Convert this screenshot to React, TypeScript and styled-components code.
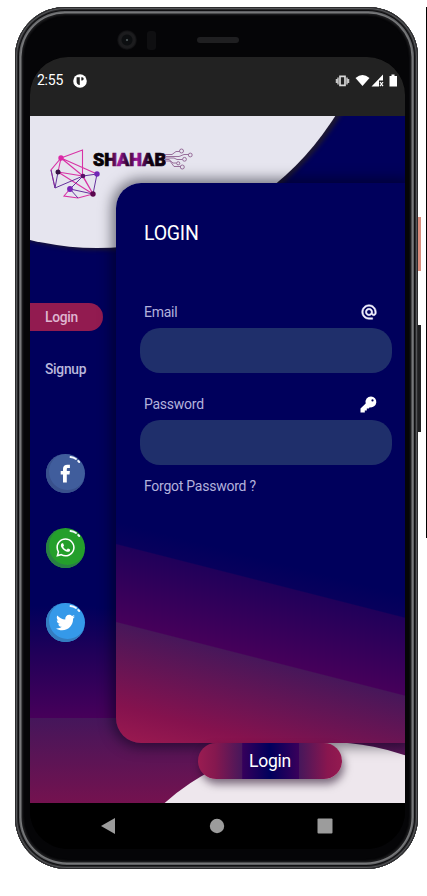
import React from 'react';
import styled, { createGlobalStyle } from 'styled-components';
import { FaWhatsapp, FaTwitter } from 'react-icons/fa';

const GlobalStyle = createGlobalStyle`
  * { box-sizing: border-box; }
  body { margin: 0; background: #fff; font-family: Roboto, sans-serif; }
  button, input { font: inherit; border: 0; }
`;

const Stage = styled.div`
  position: relative;
  width: 427px;
  height: 896px;
  padding: 7px 0 0 15px;
  overflow: hidden;
  background: #fff;
`;

const Phone = styled.div`
  position: relative;
  width: 403px;
  height: 862px;
  padding: 50px 13px 20px 15px;
  border-radius: 50px 50px 52px 52px;
  background: #050507;
  box-shadow: inset 0 0 0 1px #2c2c2e, inset 0 0 0 2px #555659, inset 0 0 0 3px #29292b,
    inset 0 0 0 4px #101012, inset 0 0 0 5px #5f6063, inset 0 0 0 6.5px #77787a,
    inset 0 0 2px 8px #202022;
`;

const SideKey = styled.div<{ $top: number; $height: number; $color: string }>`
  position: absolute;
  left: 418px;
  top: ${p => p.$top}px;
  width: 3px;
  height: ${p => p.$height}px;
  background: ${p => p.$color};
`;

const EdgeRule = styled.div`
  position: absolute;
  right: 0;
  top: 7px;
  width: 1px;
  height: 531px;
  background: #000;
`;

const Sensors = styled.div`
  position: absolute;
  left: 102px;
  top: 23px;
  display: flex;
  align-items: center;
`;

const Lens = styled.div`
  width: 20px;
  height: 20px;
  border-radius: 50%;
  background: radial-gradient(circle, #4c5557 0 .6px, #0c0e10 1.6px 5px, #1c1c1e 6px 8px, #09090b 10px);
`;

const Proximity = styled.div`
  width: 9px;
  height: 19px;
  margin-left: 10px;
  border-radius: 3px;
  background: #0f0f11;
`;

const Speaker = styled.div`
  width: 42px;
  height: 6px;
  margin-left: 41px;
  border-radius: 3px;
  background: #1f1f21;
`;

const Screen = styled.div`
  display: flex;
  flex-direction: column;
  width: 375px;
  height: 792px;
  border-radius: 38px;
  overflow: hidden;
  background: #000;
`;

const StatusBar = styled.div`
  display: flex;
  align-items: flex-start;
  justify-content: space-between;
  height: 59px;
  padding: 15px 6px 0 7px;
  background: #222;
  color: #fff;
`;

const StatusGroup = styled.div`
  display: flex;
  align-items: center;
  height: 17px;
`;

const Clock = styled.span`
  width: 36px;
  font-size: 14px;
  letter-spacing: -0.25px;
  line-height: 19px;
`;

const AppView = styled.main`
  position: relative;
  display: flex;
  height: 687px;
  flex: none;
  overflow: hidden;
  background:
    linear-gradient(180deg, #45165b, #74124f) 0 602px / 100% 85px no-repeat,
    linear-gradient(180deg, #00005c 0 490px, #1f0059 535px, #47005a 602px);
`;

const Disc = styled.div<{ $x: number; $y: number; $r: number; $color: string; $shade?: boolean }>`
  position: absolute;
  left: ${p => p.$x - p.$r}px;
  top: ${p => p.$y - p.$r}px;
  width: ${p => p.$r * 2}px;
  height: ${p => p.$r * 2}px;
  border-radius: 50%;
  background: ${p => p.$color};
  box-shadow: ${p => (p.$shade ? '4px 2px 4px rgba(31, 25, 45, .9)' : 'none')};
`;

const Brand = styled.div`
  position: absolute;
  left: 20px;
  top: 32px;
  display: flex;
`;

const Rail = styled.nav`
  position: relative;
  display: flex;
  flex-direction: column;
  width: 86px;
  padding-top: 187px;
  font-size: 13.8px;
  font-weight: 500;
  letter-spacing: -0.25px;
`;

const RailLink = styled.a<{ $active?: boolean }>`
  width: 73px;
  height: 28px;
  margin-bottom: 24px;
  padding-left: 15px;
  line-height: 29px;
  border-radius: 0 14px 14px 0;
  color: ${p => (p.$active ? '#dfb5d1' : '#bab8dc')};
  background: ${p => (p.$active ? '#921b50' : 'transparent')};
`;

const Socials = styled.div`
  display: flex;
  flex-direction: column;
  gap: 35px;
  padding: 46.5px 0 0 16px;
`;

const Social = styled.div<{ $color: string; $rim: string }>`
  position: relative;
  display: grid;
  place-items: center;
  width: 39px;
  height: 39.5px;
  border-radius: 50%;
  color: #fff;
  background: ${p => p.$color};
  box-shadow: inset 2px -2px 0 1px ${p => p.$rim};
`;

const Glint = styled.svg`
  position: absolute;
  left: 23px;
  top: 1px;
`;

const Card = styled.section`
  position: relative;
  width: 289px;
  height: 560px;
  margin-top: 67px;
  padding: 39px 13px 0 24px;
  border-radius: 25px 0 0 25px;
  color: #b3b2dc;
  font-size: 14px;
  letter-spacing: -0.25px;
  background: linear-gradient(194.3deg, #00005c 65%, #08005c 68.5%, #20005a 68.7%, #46005a 80.8%, #47175a 81%, #85124e 94%, #9c1a50 100%);
  box-shadow: 0 0 13px 4px rgba(0, 0, 15, .5);
`;

const Title = styled.h1`
  margin: 0 0 58px 4px;
  font-size: 19.5px;
  line-height: 24px;
  font-weight: 400;
  color: #fff;
`;

const Field = styled.label`
  display: block;
  margin-bottom: 23px;
`;

const FieldHead = styled.span`
  display: flex;
  align-items: center;
  justify-content: space-between;
  height: 16px;
  margin-bottom: 8px;
  padding: 0 15px 0 4px;
  line-height: 16px;
`;

const Input = styled.input`
  display: block;
  width: 252px;
  height: 45px;
  padding: 0 18px;
  border-radius: 20px;
  outline: 0;
  color: #fff;
  background: #1f2f6b;
`;

const Forgot = styled.a`
  display: block;
  margin: -10px 0 0 4px;
  line-height: 16px;
`;

const LoginButton = styled.button`
  position: absolute;
  left: 168px;
  top: 627px;
  width: 144px;
  height: 36px;
  padding: 0;
  border-radius: 18px;
  font-size: 17.5px;
  letter-spacing: -0.2px;
  line-height: 36px;
  color: #fff;
  background: linear-gradient(90deg, #9a1c51 0, #85184f 12%, #47175b 30.5%, #35005b 31%, #00005c 50%, #39005b 70%, #47175b 70.5%, #89164f 90%, #941a50 100%);
  box-shadow: 2px 5px 9px rgba(25, 0, 30, .55);
`;

const NavBar = styled.div`
  display: flex;
  align-items: flex-start;
  justify-content: space-between;
  height: 46px;
  padding: 15px 72px 0 70px;
  background: #000;
`;

const BrandMark = () => (
  <svg width="50" height="54" viewBox="0 0 50 54" fill="none">
    <g strokeWidth="1.1" stroke="#d832a5">
      <path d="M11 10 32.500 2v26M11 10l22 18M11 10 1 22 5 40M11 10 47 26M11 10 8 24" />
      <path d="M8 24 32.500 28 43 46 8 24M20 41l-6 7 14 2 15-4-10-18" />
    </g>
    <path d="M1 22 5 40M8 24 5 40l28-12M33 28 47 26l-4 20M33 28 20 41 43 46M20 41l8 9" stroke="#65329c" strokeWidth="1" />
    <circle cx="11" cy="10" r="2.700" fill="#dc28a6" />
    <circle cx="8" cy="24" r="2.500" fill="#371044" />
    <circle cx="33" cy="28" r="2.300" fill="#581065" />
    <circle cx="47" cy="26" r="2.700" fill="#7126b5" />
    <circle cx="20" cy="41" r="2.900" fill="#7822b5" />
    <circle cx="43" cy="46" r="2.700" fill="#5b074e" />
  </svg>
);

const Wordmark = styled.svg`
  margin: 0 -1px 0 -8px;
  font-family: Roboto, sans-serif;
  font-weight: 900;
  font-size: 17.5px;
`;

const BrandName = () => (
  <Wordmark width="74" height="24" viewBox="0 0 74 24">
    <defs>
      <linearGradient id="wordmark">
        <stop offset=".2" stopColor="#080008" />
        <stop offset=".36" stopColor="#9c1598" />
        <stop offset=".48" stopColor="#240324" />
        <stop offset=".6" stopColor="#a0169c" />
        <stop offset=".78" stopColor="#100010" />
      </linearGradient>
    </defs>
    <text x="1" y="17.600" textLength="73" lengthAdjust="spacingAndGlyphs" fill="url(#wordmark)" stroke="url(#wordmark)" strokeWidth=".7">SHAHAB</text>
  </Wordmark>
);

const Circuit = () => (
  <svg width="28" height="24" viewBox="0 0 28 24" fill="none" stroke="#8f6191" strokeWidth=".9">
    <path d="M0 6.500h7l4-3h3.500M0 8.500h14l5-2h4.500M0 10h9l3 1.500h5.500M0 11.500h4l4 3.500h3.500M0 13h5l4 5.500h6.500" />
    <circle cx="16.500" cy="3" r="2" />
    <circle cx="25.300" cy="7" r="1.900" />
    <circle cx="19.500" cy="11.300" r="1.900" />
    <circle cx="13.200" cy="15.300" r="1.600" />
    <circle cx="17.300" cy="19" r="2" />
  </svg>
);

const FacebookIcon = () => (
  <svg width="12" height="19" viewBox="0 0 12 19" fill="#fff">
    <path d="M3 18.500V10.500H.7V6.900H3V5C3 1.900 4.700.7 7.400.7h2.500v3.400H8.300c-1.200 0-1.500.4-1.500 1.400v1.400h3.100l-.4 3.600H6.800v8Z" />
  </svg>
);

const AtIcon = () => (
  <svg width="16" height="16" viewBox="1 1 22 22" fill="#f2f1ff" stroke="#f2f1ff" strokeWidth=".7">
    <path d="M12 2C6.480 2 2 6.480 2 12s4.480 10 10 10h5v-2h-5c-4.340 0-8-3.660-8-8s3.660-8 8-8 8 3.660 8 8v1.430c0 .79-.71 1.570-1.500 1.570s-1.500-.78-1.500-1.570V12c0-2.760-2.240-5-5-5s-5 2.240-5 5 2.240 5 5 5c1.380 0 2.640-.56 3.540-1.470.65.89 1.770 1.470 2.960 1.470 1.970 0 3.500-1.600 3.500-3.570V12c0-5.520-4.480-10-10-10zm0 13c-1.660 0-3-1.340-3-3s1.340-3 3-3 3 1.340 3 3-1.340 3-3 3z" />
  </svg>
);

const KeyIcon = () => (
  <svg width="17" height="17" viewBox="0 0 17 17">
    <path
      fillRule="evenodd"
      fill="#fff"
      d="M11 .4a5.500 5.500 0 0 0-5.300 7L.5 12.400v4h4.300v-2h2v-2h2l1-1.100A5.500 5.500 0 1 0 11 .4Zm1.500 2.900a1.100 1.100 0 1 1 0 2.200 1.100 1.100 0 0 1 0-2.200Z"
    />
  </svg>
);

const Shine = () => (
  <Glint width="14" height="12" viewBox="0 0 14 12" fill="none" stroke="#f4f8ff" strokeWidth="1.900" strokeLinecap="round">
    <path d="M1.500 2Q4.500 2.300 7 4M9.200 6l1 1" />
  </Glint>
);

const AppBadge = () => (
  <svg width="14" height="14" viewBox="0 0 14 14">
    <circle cx="7" cy="7" r="6.800" fill="#fff" />
    <path d="M3.600 3.200h3.200v7.800c-1.900 0-3.200-1.300-3.200-3.200ZM8.300 3.200h.8a1.600 1.600 0 0 1 0 3.200h-.8Z" fill="#222" />
  </svg>
);

const StatusIcons = () => (
  <svg width="64" height="16" viewBox="0 0 64 16" fill="#fff">
    <path d="M5 3.300h5v9H5Z" fill="none" stroke="#d8d8d8" strokeWidth="1.700" />
    <path d="M1.500 6v4M3 4.500v7M12 4.500v7M13.500 6v4" stroke="#c5c5c5" strokeWidth="1.500" />
    <path d="M20.500 5Q27.500-1 34.500 5L27.500 13Z" />
    <path d="M48 1.500V7.500h-4V13.500H36.500Z" />
    <path d="m45 9 3 4.200m0-4.200-3 4.200" stroke="#fff" strokeWidth="1.200" />
    <path d="M56.500 1.500h3V3H62v10.500h-7.500V3h2Z" />
  </svg>
);

export default function App() {
  return (
    <Stage>
      <GlobalStyle />
      <SideKey $top={217} $height={54} $color="#d98c7c" />
      <SideKey $top={325} $height={107} $color="#202022" />
      <EdgeRule />
      <Phone>
        <Sensors>
          <Lens />
          <Proximity />
          <Speaker />
        </Sensors>
        <Screen>
          <StatusBar>
            <StatusGroup>
              <Clock>2:55</Clock>
              <AppBadge />
            </StatusGroup>
            <StatusGroup>
              <StatusIcons />
            </StatusGroup>
          </StatusBar>
          <AppView>
            <Disc $x={67} $y={-149} $r={281} $color="#e6e5ef" $shade />
            <Disc $x={296} $y={870} $r={244} $color="#eee7ed" />
            <Brand>
              <BrandMark />
              <BrandName />
              <Circuit />
            </Brand>
            <Rail>
              <RailLink $active>Login</RailLink>
              <RailLink>Signup</RailLink>
              <Socials>
                <Social $color="#405d9c" $rim="#39518c"><FacebookIcon /><Shine /></Social>
                <Social $color="#249f2b" $rim="#298044"><FaWhatsapp size={21} /><Shine /></Social>
                <Social $color="#3599e9" $rim="#347dc0"><FaTwitter size={19} /><Shine /></Social>
              </Socials>
            </Rail>
            <Card>
              <Title>LOGIN</Title>
              <Field>
                <FieldHead>Email<AtIcon /></FieldHead>
                <Input type="email" />
              </Field>
              <Field>
                <FieldHead>Password<KeyIcon /></FieldHead>
                <Input type="password" />
              </Field>
              <Forgot>Forgot Password ?</Forgot>
            </Card>
            <LoginButton>Login</LoginButton>
          </AppView>
          <NavBar>
            <svg width="16" height="16" viewBox="0 0 16 16"><path d="M1 8 15 0v16Z" fill="#9c9c9c" /></svg>
            <svg width="16" height="16" viewBox="0 0 16 16"><circle cx="8" cy="8" r="7.200" fill="#9c9c9c" /></svg>
            <svg width="16" height="16" viewBox="0 0 16 16"><rect x=".5" y=".5" width="15" height="15" rx="1" fill="#9c9c9c" /></svg>
          </NavBar>
        </Screen>
      </Phone>
    </Stage>
  );
}
